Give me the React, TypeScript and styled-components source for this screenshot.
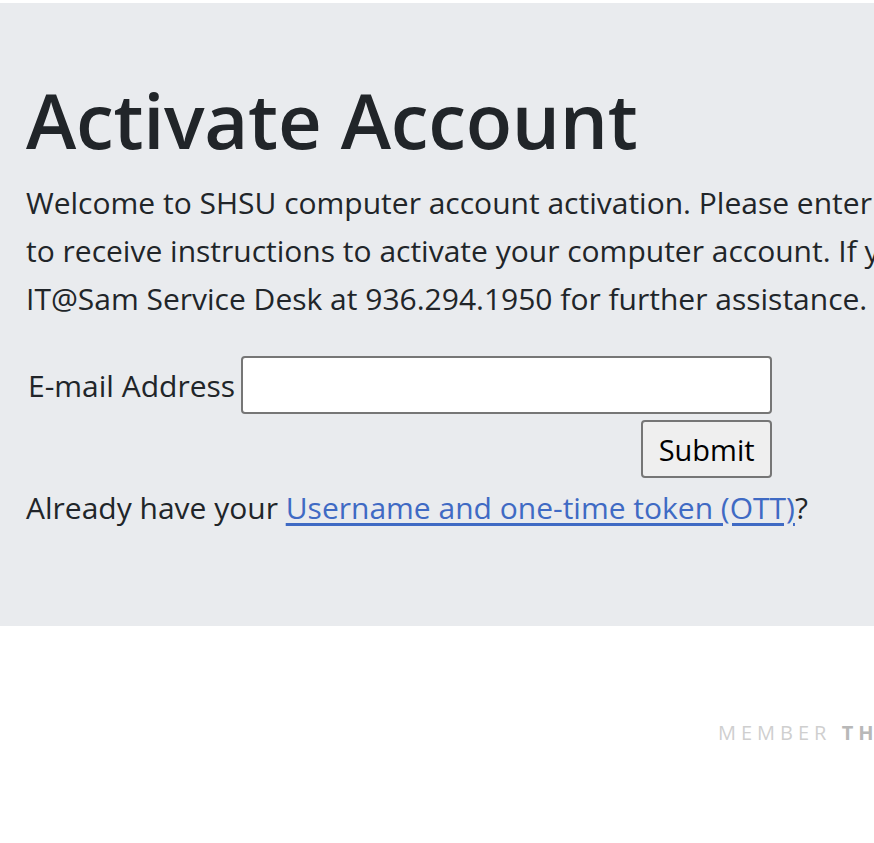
import React from 'react';
import styled, { createGlobalStyle } from 'styled-components';

const GlobalStyle = createGlobalStyle`
  html, body {
    margin: 0;
    padding: 0;
    background: #ffffff;
    overflow: hidden;
  }
  body {
    font-family: "Open Sans", "Noto Sans", sans-serif;
    color: #212529;
  }
`;

const Page = styled.div`
  width: 1800px;
  padding-top: 3px;
`;

const Hero = styled.section`
  background: #e9ebee;
  height: 623px;
  box-sizing: border-box;
  padding: 72px 26px 0 26px;
`;

const Title = styled.h1`
  margin: 0 0 14px 0;
  font-size: 76px;
  font-weight: 600;
  line-height: 90px;
  letter-spacing: -0.3px;
`;

const Intro = styled.p`
  margin: 0 0 27px 0;
  font-size: 30px;
  line-height: 48px;
`;

const FormTable = styled.table`
  border-spacing: 4px 6px;
  margin-left: -2px;
`;

const LabelCell = styled.td`
  padding: 0 2px 0 0;
  font-size: 30px;
  vertical-align: middle;
`;

const FieldCell = styled.td<{ $right?: boolean }>`
  padding: 0;
  text-align: ${(p) => (p.$right ? 'right' : 'left')};
`;

const EmailInput = styled.input`
  box-sizing: border-box;
  display: block;
  width: 531px;
  height: 58px;
  border: 2px solid #767676;
  border-radius: 4px;
  background: #fff;
  font-size: 28px;
  padding: 0 8px;
`;

const SubmitButton = styled.button`
  box-sizing: border-box;
  width: 131px;
  height: 58px;
  border: 2px solid #767676;
  border-radius: 4px;
  background: #efefef;
  font-family: "Open Sans", "Noto Sans", sans-serif;
  font-size: 29px;
  color: #000;
  padding: 0;
  vertical-align: top;
`;

const Already = styled.p`
  margin: 0;
  font-size: 30px;
  line-height: 48px;
`;

const Link = styled.a`
  color: #3f6ac4;
  text-decoration: underline;
  text-underline-offset: 4px;
`;

const Footer = styled.footer`
  padding: 93px 0 0 718px;
  font-size: 20px;
  letter-spacing: 5px;
  color: #cfcfcf;
`;

const Strong = styled.span`
  font-weight: 700;
  color: #b8b8b8;
`;

export default function App() {
  return (
    <>
      <GlobalStyle />
      <Page>
        <Hero>
          <Title>Activate Account</Title>
          <Intro>
            Welcome to SHSU computer account activation. Please enter your e-mail address below
            <br />
            to receive instructions to activate your computer account. If you have any problems, please contact the
            <br />
            IT@Sam Service Desk at 936.294.1950 for further assistance.
          </Intro>
          <FormTable>
            <tbody>
              <tr>
                <LabelCell>E-mail Address</LabelCell>
                <FieldCell>
                  <EmailInput type="text" />
                </FieldCell>
              </tr>
              <tr>
                <LabelCell />
                <FieldCell $right>
                  <SubmitButton type="submit">Submit</SubmitButton>
                </FieldCell>
              </tr>
            </tbody>
          </FormTable>
          <Already>
            Already have your <Link href="#">Username and one-time token (OTT)</Link>?
          </Already>
        </Hero>
        <Footer>
          MEMBER <Strong>THE TEXAS STATE UNIVERSITY SYSTEM</Strong>
        </Footer>
      </Page>
    </>
  );
}
